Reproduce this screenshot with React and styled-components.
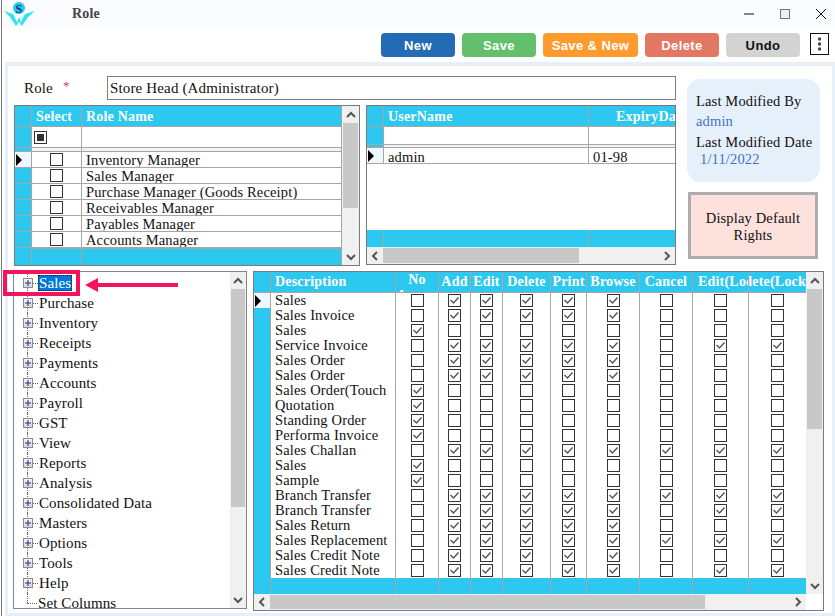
import React from 'react';
import styled, { createGlobalStyle } from 'styled-components';

const CYAN = '#2dc8f0';
const LINE = '#a6a6a6';

const GlobalStyle = createGlobalStyle`
  html, body {
    margin: 0;
    padding: 0;
    background: #fff;
  }
  * {
    box-sizing: border-box;
  }
`;

const roles = [
  'Inventory Manager',
  'Sales Manager',
  'Purchase Manager (Goods Receipt)',
  'Receivables Manager',
  'Payables Manager',
  'Accounts Manager',
];

const treeItems = [
  'Sales', 'Purchase', 'Inventory', 'Receipts', 'Payments', 'Accounts', 'Payroll', 'GST', 'View',
  'Reports', 'Analysis', 'Consolidated Data', 'Masters', 'Options', 'Tools', 'Help',
];

const rightsHeaders = ['Add', 'Edit', 'Delete', 'Print', 'Browse', 'Cancel'];

// flags: No, Add, Edit, Delete, Print, Browse, Cancel, Edit(Lock), Delete(Lock)
const rights = [
  ['Sales', '011111000'],
  ['Sales Invoice', '011111000'],
  ['Sales', '100000000'],
  ['Service Invoice', '011111011'],
  ['Sales Order', '011111000'],
  ['Sales Order', '011111000'],
  ['Sales Order(Touch', '100000000'],
  ['Quotation', '100000000'],
  ['Standing Order', '100000000'],
  ['Performa Invoice', '100000000'],
  ['Sales Challan', '011111111'],
  ['Sales', '100000000'],
  ['Sample', '100000000'],
  ['Branch Transfer', '011111111'],
  ['Branch Transfer', '011111011'],
  ['Sales Return', '011111000'],
  ['Sales Replacement', '011111111'],
  ['Sales Credit Note', '011111000'],
  ['Sales Credit Note', '011111011'],
];

const Window = styled.div`
  position: relative;
  width: 834px;
  height: 616px;
  margin-left: 1px;
  border-left: 1px solid #7a7a7a;
  display: flex;
  flex-direction: column;
  overflow: hidden;
  background: #fff;
  color: #111;
  font-family: 'Liberation Serif', serif;
  font-size: 14.5px;
  letter-spacing: 0.15px;
`;

const TitleBar = styled.div`
  height: 27px;
  flex: none;
  display: flex;
  align-items: center;
  background: #fbfcff;
`;

const Logo = styled.svg`
  width: 36px;
  height: 26px;
  margin-left: 1px;
  flex: none;
`;

const Title = styled.div`
  margin-left: 33px;
  margin-top: 1px;
  font-weight: 700;
  font-size: 14px;
  color: #444;
`;

const WindowControls = styled.div`
  margin-left: auto;
  margin-right: 8px;
  display: flex;
  align-items: center;
  gap: 24px;
`;

const ControlIcon = styled.svg`
  width: 12px;
  height: 12px;
  display: block;
`;

const Toolbar = styled.div`
  height: 35px;
  flex: none;
  display: flex;
  justify-content: flex-end;
  padding: 6px 6px 0 0;
  gap: 7px;
`;

const ActionButton = styled.button`
  width: ${p => p.$w || 74}px;
  height: 24px;
  border: none;
  border-radius: 4px;
  padding: 0;
  background: ${p => p.$bg};
  color: ${p => p.$fg || '#fff'};
  font-family: 'Liberation Sans', sans-serif;
  font-weight: 700;
  font-size: 13px;
  letter-spacing: 0.4px;
`;

const MoreButton = styled.button`
  width: 19px;
  height: 22px;
  margin-left: 3px;
  padding: 0;
  border: 1px solid #111;
  background: #fff;
  display: flex;
  align-items: center;
  justify-content: center;
`;

const Panel = styled.div`
  flex: 1;
  margin-left: 3px;
  border: solid #e6f0fb;
  border-width: 4px 3px 3px 3px;
  background: #fff;
  display: flex;
  flex-direction: column;
`;

const TopArea = styled.div`
  height: 204px;
  flex: none;
  display: flex;
  padding-left: 6px;
`;

const LeftColumn = styled.div`
  width: 662px;
  padding-top: 10px;
  display: flex;
  flex-direction: column;
  gap: 5px;
`;

const RoleRow = styled.div`
  height: 24px;
  display: flex;
  align-items: center;
`;

const RoleLabel = styled.label`
  width: 93px;
  padding-left: 10px;
  flex: none;
  font-size: 15px;
`;

const Required = styled.span`
  color: #f0306a;
  margin-left: 10px;
  position: relative;
  top: -3px;
  font-size: 13px;
`;

const RoleInput = styled.div`
  width: 569px;
  height: 24px;
  border: 1px solid #808080;
  padding-left: 2px;
  display: flex;
  align-items: center;
  font-size: 15px;
`;

const GridsRow = styled.div`
  display: flex;
  gap: 6px;
`;

const GridFrame = styled.div`
  width: ${p => p.$w}px;
  height: ${p => p.$h}px;
  flex: none;
  border: 1px solid #7a7a7a;
  background: #fff;
  display: flex;
  overflow: hidden;
`;

const GridBody = styled.div`
  flex: 1;
  min-width: 0;
  display: flex;
  flex-direction: column;
  overflow: hidden;
`;

const GridRow = styled.div`
  display: grid;
  flex: none;
  grid-template-columns: ${p => p.$cols};
  height: ${p => p.$h}px;
  border-bottom: ${p => (p.$flat ? 'none' : `1px solid ${LINE}`)};
`;

const Filler = styled.div`
  flex: 1;
  background: #fff;
`;

const RowHead = styled.div`
  background: ${p => (p.$current ? '#eef7fe' : CYAN)};
  border-right: 1px solid ${LINE};
  display: flex;
  align-items: center;
  padding-left: 1px;
`;

const Pointer = styled.span`
  width: 0;
  height: 0;
  border-style: solid;
  border-width: 6px 0 6px 6px;
  border-color: transparent transparent transparent #000;
`;

const HeadCell = styled.div`
  background: ${CYAN};
  border-right: 1px solid ${LINE};
  color: #fff;
  font-weight: 700;
  font-size: 14px;
  letter-spacing: 0.2px;
  display: flex;
  align-items: center;
  justify-content: ${p => p.$justify || 'center'};
  padding: ${p => p.$drop || 0}px 0 0 ${p => p.$pad || 0}px;
  white-space: nowrap;
  overflow: hidden;
`;

const WrappedHead = styled(HeadCell)`
  white-space: normal;
  text-align: center;
  align-items: flex-start;
  line-height: 16px;
`;

const Cell = styled.div`
  border-right: 1px solid ${LINE};
  display: flex;
  align-items: center;
  justify-content: ${p => (p.$center ? 'center' : 'flex-start')};
  padding: ${p => p.$drop || 0}px 0 0 ${p => p.$pad || 0}px;
  white-space: nowrap;
  overflow: hidden;
  line-height: 15px;
  background: ${p => p.$bg || '#fff'};
`;

const FootCell = styled.div`
  background: ${CYAN};
  border-right: 1px solid ${LINE};
`;

const Box = styled.span`
  width: 13px;
  height: 13px;
  flex: none;
  border: 1px solid #333;
  background: #fff;
  display: flex;
  align-items: center;
  justify-content: center;
`;

const Indeterminate = styled.span`
  width: 7px;
  height: 7px;
  background: #333;
`;

const CheckMark = styled.svg`
  width: 11px;
  height: 11px;
  display: block;
`;

const Check = ({ on }) => (
  <Box>
    {on && (
      <CheckMark viewBox="0 0 11 11">
        <polyline points="1.5,5 4.5,8 9.5,2.5" fill="none" stroke="#555" strokeWidth="1.4" />
      </CheckMark>
    )}
  </Box>
);

const VTrack = styled.div`
  width: ${p => p.$w || 17}px;
  flex: none;
  background: #f0f0f0;
  display: flex;
  flex-direction: column;
`;

const HTrack = styled.div`
  height: ${p => p.$h || 17}px;
  flex: none;
  background: #f0f0f0;
  display: flex;
`;

const ArrowSlot = styled.div`
  flex: none;
  width: ${p => (p.$horizontal ? '16px' : 'auto')};
  height: ${p => (p.$horizontal ? 'auto' : '17px')};
  display: flex;
  align-items: center;
  justify-content: center;
`;

const VThumb = styled.div`
  height: ${p => p.$size}px;
  flex: none;
  margin: 0 1px;
  background: #c8c8c8;
`;

const HThumb = styled.div`
  width: ${p => p.$size}px;
  flex: none;
  margin: 1px 0;
  background: #c8c8c8;
`;

const TrackRest = styled.div`
  flex: 1;
`;

const chevrons = {
  up: '1,7 5,3 9,7',
  down: '1,3 5,7 9,3',
  left: '7,1 3,5 7,9',
  right: '3,1 7,5 3,9',
};

const Chevron = ({ dir }) => (
  <svg width="10" height="10" viewBox="0 0 10 10">
    <polyline points={chevrons[dir]} fill="none" stroke="#555" strokeWidth="2" />
  </svg>
);

const Corner = styled.div`
  height: 16px;
  flex: none;
  background: #fff;
`;

const VScroll = ({ thumb, w, corner }) => (
  <VTrack $w={w}>
    <ArrowSlot><Chevron dir="up" /></ArrowSlot>
    <VThumb $size={thumb} />
    <TrackRest />
    <ArrowSlot><Chevron dir="down" /></ArrowSlot>
    {corner && <Corner />}
  </VTrack>
);

const HScroll = ({ thumb, h }) => (
  <HTrack $h={h}>
    <ArrowSlot $horizontal><Chevron dir="left" /></ArrowSlot>
    <HThumb $size={thumb} />
    <TrackRest />
    <ArrowSlot $horizontal><Chevron dir="right" /></ArrowSlot>
  </HTrack>
);

const RightColumn = styled.div`
  margin-left: 11px;
  padding-top: 13px;
  display: flex;
  flex-direction: column;
  align-items: flex-start;
`;

const InfoCard = styled.div`
  width: 133px;
  height: 103px;
  border-radius: 14px;
  background: #e6f0fb;
  padding: 14px 0 0 9px;
  font-size: 14.5px;
`;

const InfoLabel = styled.div`
  height: 17px;
  line-height: 17px;
  white-space: nowrap;
`;

const InfoValue = styled.div`
  height: ${p => p.$h}px;
  line-height: ${p => p.$lh}px;
  color: #4472c4;
  padding-left: ${p => p.$pad || 0}px;
  white-space: nowrap;
`;

const DefaultButton = styled.button`
  width: 130px;
  height: 67px;
  margin: 10px 0 0 1px;
  border: 3px solid #adadad;
  background: #fde1dd;
  font-family: inherit;
  font-size: 14.5px;
  letter-spacing: 0.15px;
  line-height: 17px;
  color: #111;
  padding: 2px 14px 0;
`;

const BottomArea = styled.div`
  display: flex;
  gap: 6px;
  padding-left: 5px;
  padding-top: 1px;
`;

const TreeFrame = styled.div`
  width: 234px;
  height: 338px;
  flex: none;
  border: 1px solid #858585;
  display: flex;
  overflow: hidden;
`;

const TreeList = styled.div`
  flex: 1;
  min-width: 0;
  padding: 1px 0 0 13px;
  overflow: hidden;
`;

const TreeRow = styled.div`
  position: relative;
  height: 20px;
  flex: none;
  display: flex;
  align-items: center;
  white-space: nowrap;
  &::before {
    content: '';
    position: absolute;
    left: 0;
    top: 0;
    height: ${p => (p.$last ? '50%' : '100%')};
    border-left: 1px dotted #666;
  }
`;

const Expander = styled.span`
  position: relative;
  z-index: 1;
  width: 10px;
  height: 10px;
  margin-left: -4px;
  flex: none;
  border: 1px solid #8a8a8a;
  background: linear-gradient(#f4f4f4, #d8d8d8);
  display: flex;
  align-items: center;
  justify-content: center;
`;

const Dash = styled.span`
  width: ${p => p.$w}px;
  flex: none;
  border-top: 1px dotted #666;
`;

const TreeLabel = styled.span`
  padding: 0 1px;
  line-height: 16px;
  font-size: 15px;
  letter-spacing: 0.1px;
  ${p => p.$selected && `
    background: #0078d7;
    color: #fff;
    outline: 1px dotted #222;
    outline-offset: -1px;
  `}
`;

const Annotation = styled.div`
  position: absolute;
  left: 1px;
  top: 270px;
  width: 77px;
  height: 26px;
  border: 4px solid #f5135f;
  pointer-events: none;
`;

const AnnotationArrow = styled.svg`
  position: absolute;
  left: 82px;
  top: 275px;
  width: 96px;
  height: 20px;
`;

const DATA_COLS = '17px 50px 260px';
const USER_COLS = '17px 205px 120px';
const RIGHTS_COLS = '17px 125px 43px 32px 32px 48px 36px 53px 53px 56px 58px';

export default function App() {
  return (
    <Window>
      <GlobalStyle />
      <TitleBar>
        <Logo viewBox="0 0 36 26">
          <circle cx="16" cy="7" r="6" fill="#27c8ee" />
          <text x="16" y="11.5" textAnchor="middle" fontSize="12" fontWeight="700" fill="#14307e" fontFamily="Liberation Serif, serif">S</text>
          <polygon points="1,10 10,13 14,21 16,16 18,21 22,13 32,10 25,16 19,25 16,21 13,25 7,16" fill="#2fe6f0" />
        </Logo>
        <Title>Role</Title>
        <WindowControls>
          <ControlIcon viewBox="0 0 12 12"><line x1="1" y1="6" x2="11" y2="6" stroke="#111" strokeWidth="1" /></ControlIcon>
          <ControlIcon viewBox="0 0 12 12"><rect x="1.5" y="1.5" width="9" height="9" fill="#eee" stroke="#777" /></ControlIcon>
          <ControlIcon viewBox="0 0 12 12"><path d="M1 1 L11 11 M11 1 L1 11" stroke="#111" strokeWidth="1" /></ControlIcon>
        </WindowControls>
      </TitleBar>

      <Toolbar>
        <ActionButton $bg="#236bb3">New</ActionButton>
        <ActionButton $bg="#63bf6b">Save</ActionButton>
        <ActionButton $bg="#ff9a2e" $w={95}>Save &amp; New</ActionButton>
        <ActionButton $bg="#e27763">Delete</ActionButton>
        <ActionButton $bg="#d3d3d3" $fg="#111">Undo</ActionButton>
        <MoreButton aria-label="More">
          <svg width="5" height="14" viewBox="0 0 5 14" fill="#444">
            <circle cx="2.5" cy="2" r="1.7" />
            <circle cx="2.5" cy="7" r="1.7" />
            <circle cx="2.5" cy="12" r="1.7" />
          </svg>
        </MoreButton>
      </Toolbar>

      <Panel>
        <TopArea>
          <LeftColumn>
            <RoleRow>
              <RoleLabel>Role<Required>*</Required></RoleLabel>
              <RoleInput>Store Head (Administrator)</RoleInput>
            </RoleRow>
            <GridsRow>
              <GridFrame $w={346} $h={161}>
                <GridBody>
                  <GridRow $cols={DATA_COLS} $h={21}>
                    <RowHead />
                    <HeadCell $justify="flex-start" $pad={4} $drop={1}>Select</HeadCell>
                    <HeadCell $justify="flex-start" $pad={4} $drop={1}>Role Name</HeadCell>
                  </GridRow>
                  <GridRow $cols={DATA_COLS} $h={21}>
                    <RowHead />
                    <Cell $pad={2}><Box><Indeterminate /></Box></Cell>
                    <Cell />
                  </GridRow>
                  <GridRow $cols={DATA_COLS} $h={4}>
                    <RowHead />
                    <Cell $bg="#f4f4f4" />
                    <Cell $bg="#f4f4f4" />
                  </GridRow>
                  {roles.map((role, i) => (
                    <GridRow key={role} $cols={DATA_COLS} $h={16}>
                      <RowHead $current={i === 0}>{i === 0 && <Pointer />}</RowHead>
                      <Cell $center><Check /></Cell>
                      <Cell $pad={4} $drop={1}>{role}</Cell>
                    </GridRow>
                  ))}
                  <GridRow $cols={DATA_COLS} $h={1} $flat>
                    <RowHead />
                    <Cell $bg={LINE} />
                    <Cell $bg={LINE} />
                  </GridRow>
                  <GridRow $cols={DATA_COLS} $h={16} $flat>
                    <FootCell />
                    <FootCell />
                    <FootCell />
                  </GridRow>
                </GridBody>
                <VScroll thumb={85} />
              </GridFrame>

              <GridFrame $w={310} $h={160}>
                <GridBody>
                  <GridRow $cols={USER_COLS} $h={21}>
                    <RowHead />
                    <HeadCell $justify="flex-start" $pad={4} $drop={1}>UserName</HeadCell>
                    <HeadCell $justify="flex-start" $pad={27} $drop={1}>ExpiryDate</HeadCell>
                  </GridRow>
                  <GridRow $cols={USER_COLS} $h={18}>
                    <RowHead />
                    <Cell />
                    <Cell />
                  </GridRow>
                  <GridRow $cols={USER_COLS} $h={3}>
                    <RowHead />
                    <Cell $bg="#f4f4f4" />
                    <Cell $bg="#f4f4f4" />
                  </GridRow>
                  <GridRow $cols={USER_COLS} $h={16}>
                    <RowHead $current><Pointer /></RowHead>
                    <Cell $pad={4} $drop={3}>admin</Cell>
                    <Cell $pad={4} $drop={3}>01-98</Cell>
                  </GridRow>
                  <Filler />
                  <GridRow $cols={USER_COLS} $h={17} $flat>
                    <FootCell />
                    <FootCell />
                    <FootCell />
                  </GridRow>
                  <HScroll thumb={196} />
                </GridBody>
              </GridFrame>
            </GridsRow>
          </LeftColumn>

          <RightColumn>
            <InfoCard>
              <InfoLabel>Last Modified By</InfoLabel>
              <InfoValue $h={24} $lh={22}>admin</InfoValue>
              <InfoLabel>Last Modified Date</InfoLabel>
              <InfoValue $h={17} $lh={17} $pad={4}>1/11/2022</InfoValue>
            </InfoCard>
            <DefaultButton>Display Default Rights</DefaultButton>
          </RightColumn>
        </TopArea>

        <BottomArea>
          <TreeFrame>
            <TreeList>
              {treeItems.map((item, i) => (
                <TreeRow key={item}>
                  <Expander>
                    <svg width="6" height="6" viewBox="0 0 6 6">
                      <path d="M0 3 H6 M3 0 V6" stroke="#23307a" strokeWidth="1" />
                    </svg>
                  </Expander>
                  <Dash $w={5} />
                  <TreeLabel $selected={i === 0}>{item}</TreeLabel>
                </TreeRow>
              ))}
              <TreeRow $last>
                <Dash $w={10} />
                <TreeLabel>Set Columns</TreeLabel>
              </TreeRow>
            </TreeList>
            <VScroll thumb={218} w={16} />
          </TreeFrame>

          <GridFrame $w={571} $h={340}>
            <GridBody>
              <GridRow $cols={RIGHTS_COLS} $h={21}>
                <RowHead />
                <HeadCell $justify="flex-start" $pad={4}>Description</HeadCell>
                <WrappedHead>No Access</WrappedHead>
                {rightsHeaders.map(h => <HeadCell key={h}>{h}</HeadCell>)}
                <HeadCell $justify="flex-start" $pad={5}>Edit(Lock)</HeadCell>
                <HeadCell $justify="flex-end">Delete(Lock</HeadCell>
              </GridRow>
              {rights.map(([name, flags], i) => (
                <GridRow key={i} $cols={RIGHTS_COLS} $h={15} $flat>
                  <RowHead $current={i === 0}>{i === 0 && <Pointer />}</RowHead>
                  <Cell $pad={4}>{name}</Cell>
                  {flags.split('').map((f, j) => (
                    <Cell key={j} $center><Check on={f === '1'} /></Cell>
                  ))}
                </GridRow>
              ))}
              <GridRow $cols={RIGHTS_COLS} $h={16} $flat>
                <FootCell />
                <FootCell />
                <FootCell />
                {rightsHeaders.map(h => <FootCell key={h} />)}
                <FootCell />
                <FootCell />
              </GridRow>
              <HScroll thumb={435} h={16} />
            </GridBody>
            <VScroll thumb={140} corner />
          </GridFrame>
        </BottomArea>
      </Panel>

      <Annotation />
      <AnnotationArrow viewBox="0 0 96 20">
        <polygon points="1,10 14,3 14,17" fill="#f5135f" />
        <line x1="10" y1="10" x2="94" y2="10" stroke="#f5135f" strokeWidth="4" />
      </AnnotationArrow>
    </Window>
  );
}
